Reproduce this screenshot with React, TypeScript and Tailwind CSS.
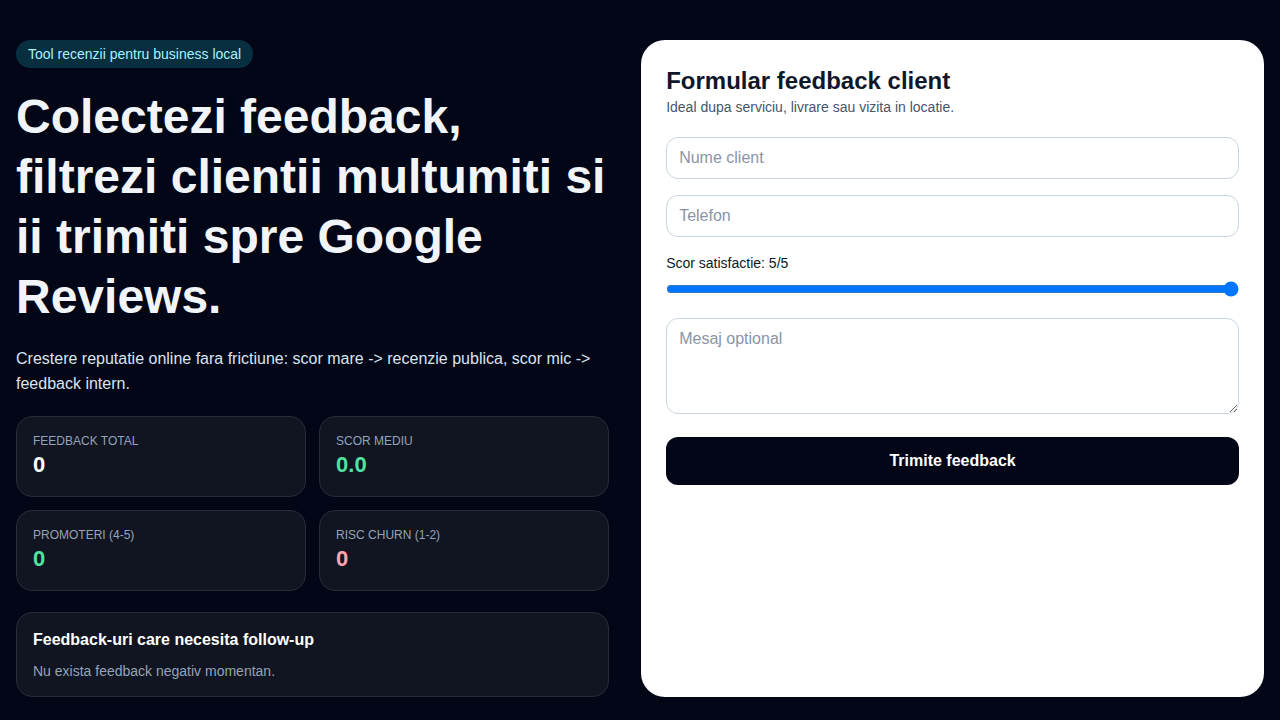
import React, { useState } from "react";

const stats = [
    { label: "Feedback total", value: "0", cls: "text-white" },
    { label: "Scor mediu", value: "0.0", cls: "text-[#4ee39f]" },
    { label: "Promoteri (4-5)", value: "0", cls: "text-[#4ee39f]" },
    { label: "Risc churn (1-2)", value: "0", cls: "text-[#fda4af]" },
];

const inputCls =
    "w-full rounded-xl border border-[#cbd5e1] bg-white px-3 text-base text-[#0f172a] placeholder:text-[#8a94a6] outline-none";

export default function App() {
    const [score, setScore] = useState(5);

    return (
        <div className="min-h-screen bg-[#020617] px-4 py-10 font-['Liberation_Sans',Arial,sans-serif]">
            <div className="grid grid-cols-[1fr_1.05fr] gap-8">
                <div className="flex flex-col">
                    <span className="self-start rounded-full bg-[#082f40] px-3 py-[5px] text-sm leading-[18px] text-[#a5f3fc]">
                        Tool recenzii pentru business local
                    </span>
                    <h1 className="mt-[19px] text-[48px] font-bold leading-[60px] text-[#f1f5f9]">
                        Colectezi feedback, filtrezi clientii multumiti si ii trimiti spre Google Reviews.
                    </h1>
                    <p className="mt-[19px] text-base leading-[25px] text-[#dbe4f0]">
                        Crestere reputatie online fara frictiune: scor mare -&gt; recenzie publica, scor mic -&gt; feedback intern.
                    </p>

                    <div className="mt-5 grid grid-cols-2 gap-[13px]">
                        {stats.map((s) => (
                            <div key={s.label}
                                className="h-[81px] rounded-2xl border border-[#262c3a] bg-[#111522] px-4 pt-4">
                                <div className="text-xs uppercase leading-4 text-[#94a3b8]">{s.label}</div>
                                <div className={`mt-[2px] text-[22px] font-bold leading-7 ${s.cls}`}>{s.value}</div>
                            </div>
                        ))}
                    </div>

                    <div className="mt-[21px] h-[85px] rounded-2xl border border-[#262c3a] bg-[#111522] px-4 pt-[17px]">
                        <h2 className="text-base font-bold leading-5 text-white">Feedback-uri care necesita follow-up</h2>
                        <p className="mt-[11px] text-sm leading-5 text-[#94a3b8]">Nu exista feedback negativ momentan.</p>
                    </div>
                </div>

                <div className="rounded-[24px] bg-white px-[25px] pt-[27px]">
                    <h2 className="text-2xl font-bold leading-7 text-[#0f172a]">Formular feedback client</h2>
                    <p className="mt-[2px] text-sm leading-5 text-[#475569]">Ideal dupa serviciu, livrare sau vizita in locatie.</p>

                    <div className="mt-5 flex flex-col gap-4">
                        <input className={`${inputCls} h-[42px]`} placeholder="Nume client" />
                        <input className={`${inputCls} h-[42px]`} placeholder="Telefon" />
                    </div>

                    <label className="mt-4 block text-sm leading-5 text-[#0f172a]">Scor satisfactie: {score}/5</label>
                    <input type="range" min={1} max={5} value={score}
                        onChange={(e) => setScore(Number(e.target.value))}
                        className="mt-2 block w-full" />

                    <textarea className={`${inputCls} mt-[21px] block h-[96px] resize-y py-2`} placeholder="Mesaj optional" />

                    <button className="mt-[23px] h-12 w-full rounded-xl bg-[#020617] text-base font-bold text-white">
                        Trimite feedback
                    </button>
                </div>
            </div>
        </div>
    );
}
